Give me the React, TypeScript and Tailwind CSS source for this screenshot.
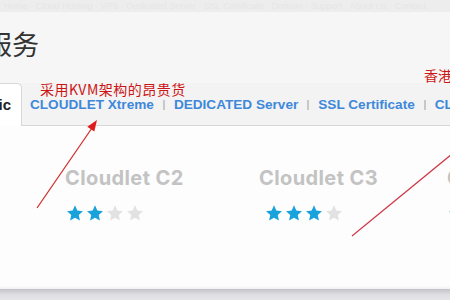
import React from "react";

const Star = ({ on }: { on: boolean }) => (
  <svg width="18" height="18" viewBox="0 0 24 24" className="shrink-0">
    <path
      d="M12 1.8l3.1 6.9 7.5.8-5.6 5.1 1.6 7.4L12 18.2 5.4 22l1.6-7.4-5.6-5.1 7.5-.8z"
      fill={on ? "#17a2dc" : "#e2e2e2"}
    />
  </svg>
);

const Sep = () => <div className="shrink-0 w-[2px] h-[10px] bg-[#c8c8c8] mx-[9px]" />;

const Card = ({ name, n, w, starPad }: { name: string; n: number; w: string; starPad: string }) => (
  <div className={`${w} shrink-0 flex flex-col`}>
    <div className="text-[20px] font-bold tracking-[0.4px] text-[#c3c3c3] leading-[24px] whitespace-nowrap" style={{ fontFamily: "Inter, 'Open Sans', sans-serif" }}>
      {name}
    </div>
    <div className={`flex gap-[2px] mt-[14px] ${starPad}`}>
      {[0, 1, 2, 3].map((i) => (
        <Star key={i} on={i < n} />
      ))}
    </div>
  </div>
);

export default function App() {
  return (
    <div className="relative w-[450px] h-[300px] overflow-hidden bg-[#f6f6f6] flex flex-col" style={{ fontFamily: "'Liberation Sans', Arial, sans-serif" }}>
      <div className="h-[12px] bg-[#ededed] shrink-0 overflow-hidden text-[9px] leading-[12px] text-[#e6e6e6] whitespace-nowrap pl-1">
        Home · Cloud Hosting · VPS · Dedicated Server · SSL Certificate · Domain · Support · About Us · Contact
      </div>
      <div className="h-[71px] shrink-0 flex items-start pt-[15px]">
        <div className="ml-[-15px] text-[27px] leading-[34px] text-[#333]" style={{ fontFamily: "'Noto Sans CJK SC', sans-serif" }}>
          服务
        </div>
      </div>
      <div className="h-[43px] shrink-0 flex items-stretch border-b border-[#d8d8d8] bg-[#f3f3f3]">
        <div className="shrink-0 ml-[-60px] w-[82px] bg-white border border-b-0 border-[#d8d8d8] rounded-tr-[5px] flex items-center justify-end pr-[10px] -mb-px">
          <span className="text-[15px] font-bold text-[#222] whitespace-nowrap">Basic</span>
        </div>
        <div className="flex items-center pl-[8px] pt-[2px] text-[13.6px] font-bold text-[#3e88da] whitespace-nowrap">
          <span>CLOUDLET Xtreme</span>
          <Sep />
          <span>DEDICATED Server</span>
          <Sep />
          <span>SSL Certificate</span>
          <Sep />
          <span>CLOUDLET Pro</span>
        </div>
      </div>
      <div className="flex-1 bg-[#fdfdfd] flex pt-[40px] pl-[65px]">
        <Card name="Cloudlet C2" n={2} w="w-[194px]" starPad="pl-[1px]" />
        <Card name="Cloudlet C3" n={3} w="w-[188px]" starPad="pl-[6px]" />
        <Card name="Cloudlet C4" n={4} w="w-[194px]" starPad="pl-[1px]" />
      </div>
      <div className="h-[14px] shrink-0 flex flex-col">
        <div className="h-[3px] bg-gradient-to-b from-[#fdfdfd] to-[#f0f0f3]" />
        <div className="flex-1 bg-gradient-to-b from-[#c4c4c8] via-[#dedee2] to-[#e6e6ea]" />
      </div>

      <div className="absolute left-[40px] top-[81px] text-[14px] leading-[16px] tracking-[0.5px] text-[#cc1515] whitespace-nowrap" style={{ fontFamily: "'Noto Sans CJK SC', sans-serif" }}>
        采用KVM架构的昂贵货
      </div>
      <div className="absolute left-[424px] top-[67px] text-[14px] leading-[16px] text-[#cc1515] whitespace-nowrap" style={{ fontFamily: "'Noto Sans CJK SC', sans-serif" }}>
        香港服务器
      </div>
      <svg className="absolute inset-0 pointer-events-none" width="450" height="300">
        <line x1="37" y1="208" x2="92" y2="128" stroke="#d42a2a" strokeWidth="1.2" />
        <polygon points="97,120 94.3,131.5 87.3,126.7" fill="#e01b1b" />
        <line x1="352" y1="236" x2="452" y2="154" stroke="#d0394a" strokeWidth="1.2" />
      </svg>
    </div>
  );
}
